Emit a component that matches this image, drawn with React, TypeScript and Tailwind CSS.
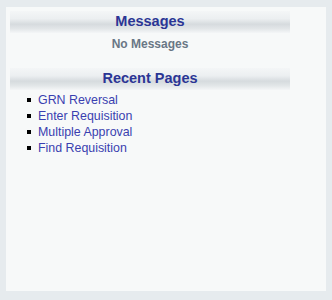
const recentPages = ['GRN Reversal', 'Enter Requisition', 'Multiple Approval', 'Find Requisition']

function SectionHeader({ title }: { title: string }) {
  return (
    <div className="w-[280px] h-[22px] flex items-center justify-center pb-[1px] bg-[linear-gradient(to_bottom,#f4f6f7_0%,#eceff1_35%,#d6dbde_60%,#e2e6e8_80%,#f4f6f7_100%)]">
      <h2 className="text-[14.5px] font-bold text-[#2b3595] leading-none">{title}</h2>
    </div>
  )
}

export default function App() {
  return (
    <div
      className="w-[332px] h-[300px] bg-[#e6ebee] pl-[6px] pt-[7px]"
      style={{ fontFamily: '"Liberation Sans", Arial, sans-serif' }}
    >
      <div className="w-[320px] h-[284px] bg-[#f7f9f9] pl-[4px] pt-[4px]">
        {/* Messages */}
        <SectionHeader title="Messages" />
        <div className="w-[280px] text-center text-[12px] leading-[14px] font-bold text-[#697785] mt-[4px]">
          No Messages
        </div>

        {/* Recent pages */}
        <div className="mt-[17px]">
          <SectionHeader title="Recent Pages" />
        </div>
        <ul className="mt-[2px]">
          {recentPages.map((page) => (
            <li key={page} className="flex items-center h-[16px] text-[12.4px] text-[#3a3fb0]">
              <span className="ml-[17px] w-[4px] h-[4px] bg-black shrink-0" />
              <a href="#" className="ml-[7px] leading-[16px]">
                {page}
              </a>
            </li>
          ))}
        </ul>
      </div>
    </div>
  )
}
